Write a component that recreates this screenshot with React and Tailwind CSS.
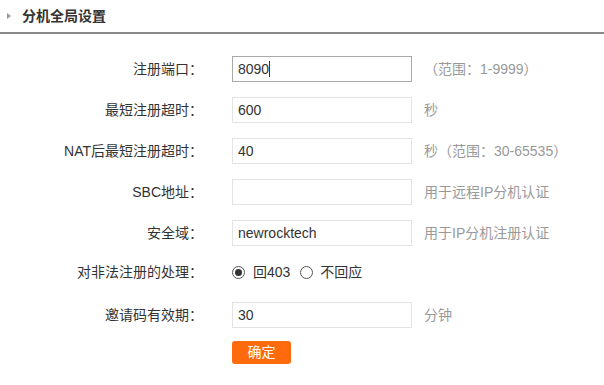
const rows = [
  { label: '最短注册超时：', value: '600', hint: '秒' },
  { label: 'NAT后最短注册超时：', value: '40', hint: '秒（范围：30-65535）' },
  { label: 'SBC地址：', value: '', hint: '用于远程IP分机认证' },
  { label: '安全域：', value: 'newrocktech', hint: '用于IP分机注册认证' },
];

const Label = ({ children }) => (
  <div className="w-[203px] shrink-0 text-right text-[14px] text-[#333]">{children}</div>
);

const Radio = ({ checked }) => (
  <span className="w-[13px] h-[13px] rounded-full border border-[#555] flex items-center justify-center bg-white">
    {checked && <span className="w-[7px] h-[7px] rounded-full bg-[#333]" />}
  </span>
);

export default function App() {
  return (
    <div
      className="w-[604px] h-[385px] bg-white text-[#333]"
      style={{ fontFamily: '"Liberation Sans", "Noto Sans CJK SC", sans-serif' }}
    >
      {/* 标题 */}
      <div className="h-[34px] flex items-center pl-[7px] border-b-2 border-[#888]">
        <span className="w-0 h-0 border-y-[3px] border-y-transparent border-l-[4px] border-l-[#999] mr-[11px]" />
        <span className="text-[14px] font-bold text-[#333]">分机全局设置</span>
      </div>

      <div className="flex flex-col pt-[22px]">
        {/* 注册端口 */}
        <div className="flex items-center h-[26px]">
          <Label>注册端口：</Label>
          <div className="ml-[29px] w-[180px] h-[26px] border border-[#a9a9a9] flex items-center pl-[5px] text-[14px] text-[#333]">
            8090<span className="w-px h-[16px] bg-[#333]" />
          </div>
          <span className="ml-[12px] text-[14px] text-[#999]">（范围：1-9999）</span>
        </div>

        {rows.map((r) => (
          <div key={r.label} className="flex items-center h-[26px] mt-[15px]">
            <Label>{r.label}</Label>
            <input
              readOnly
              value={r.value}
              className="ml-[29px] w-[180px] h-[26px] border border-[#e3e3e3] pl-[5px] text-[14px] text-[#333] outline-none"
            />
            <span className="ml-[12px] text-[14px] text-[#999]">{r.hint}</span>
          </div>
        ))}

        {/* 非法注册处理 */}
        <div className="flex items-center h-[22px] mt-[15px]">
          <Label>对非法注册的处理：</Label>
          <div className="ml-[29px] flex items-center text-[14px] text-[#333]">
            <Radio checked />
            <span className="ml-[8px]">回403</span>
            <span className="ml-[10px]"><Radio /></span>
            <span className="ml-[7px]">不回应</span>
          </div>
        </div>

        {/* 邀请码有效期 */}
        <div className="flex items-center h-[26px] mt-[19px]">
          <Label>邀请码有效期：</Label>
          <input
            readOnly
            value="30"
            className="ml-[29px] w-[180px] h-[26px] border border-[#e3e3e3] pl-[5px] text-[14px] text-[#333] outline-none"
          />
          <span className="ml-[12px] text-[14px] text-[#999]">分钟</span>
        </div>

        <div className="flex mt-[13px]">
          <div className="w-[203px] shrink-0" />
          <button className="ml-[29px] w-[59px] h-[23px] rounded-[3px] bg-[#ff6a0c] text-white text-[14px]">
            确定
          </button>
        </div>
      </div>
    </div>
  );
}
